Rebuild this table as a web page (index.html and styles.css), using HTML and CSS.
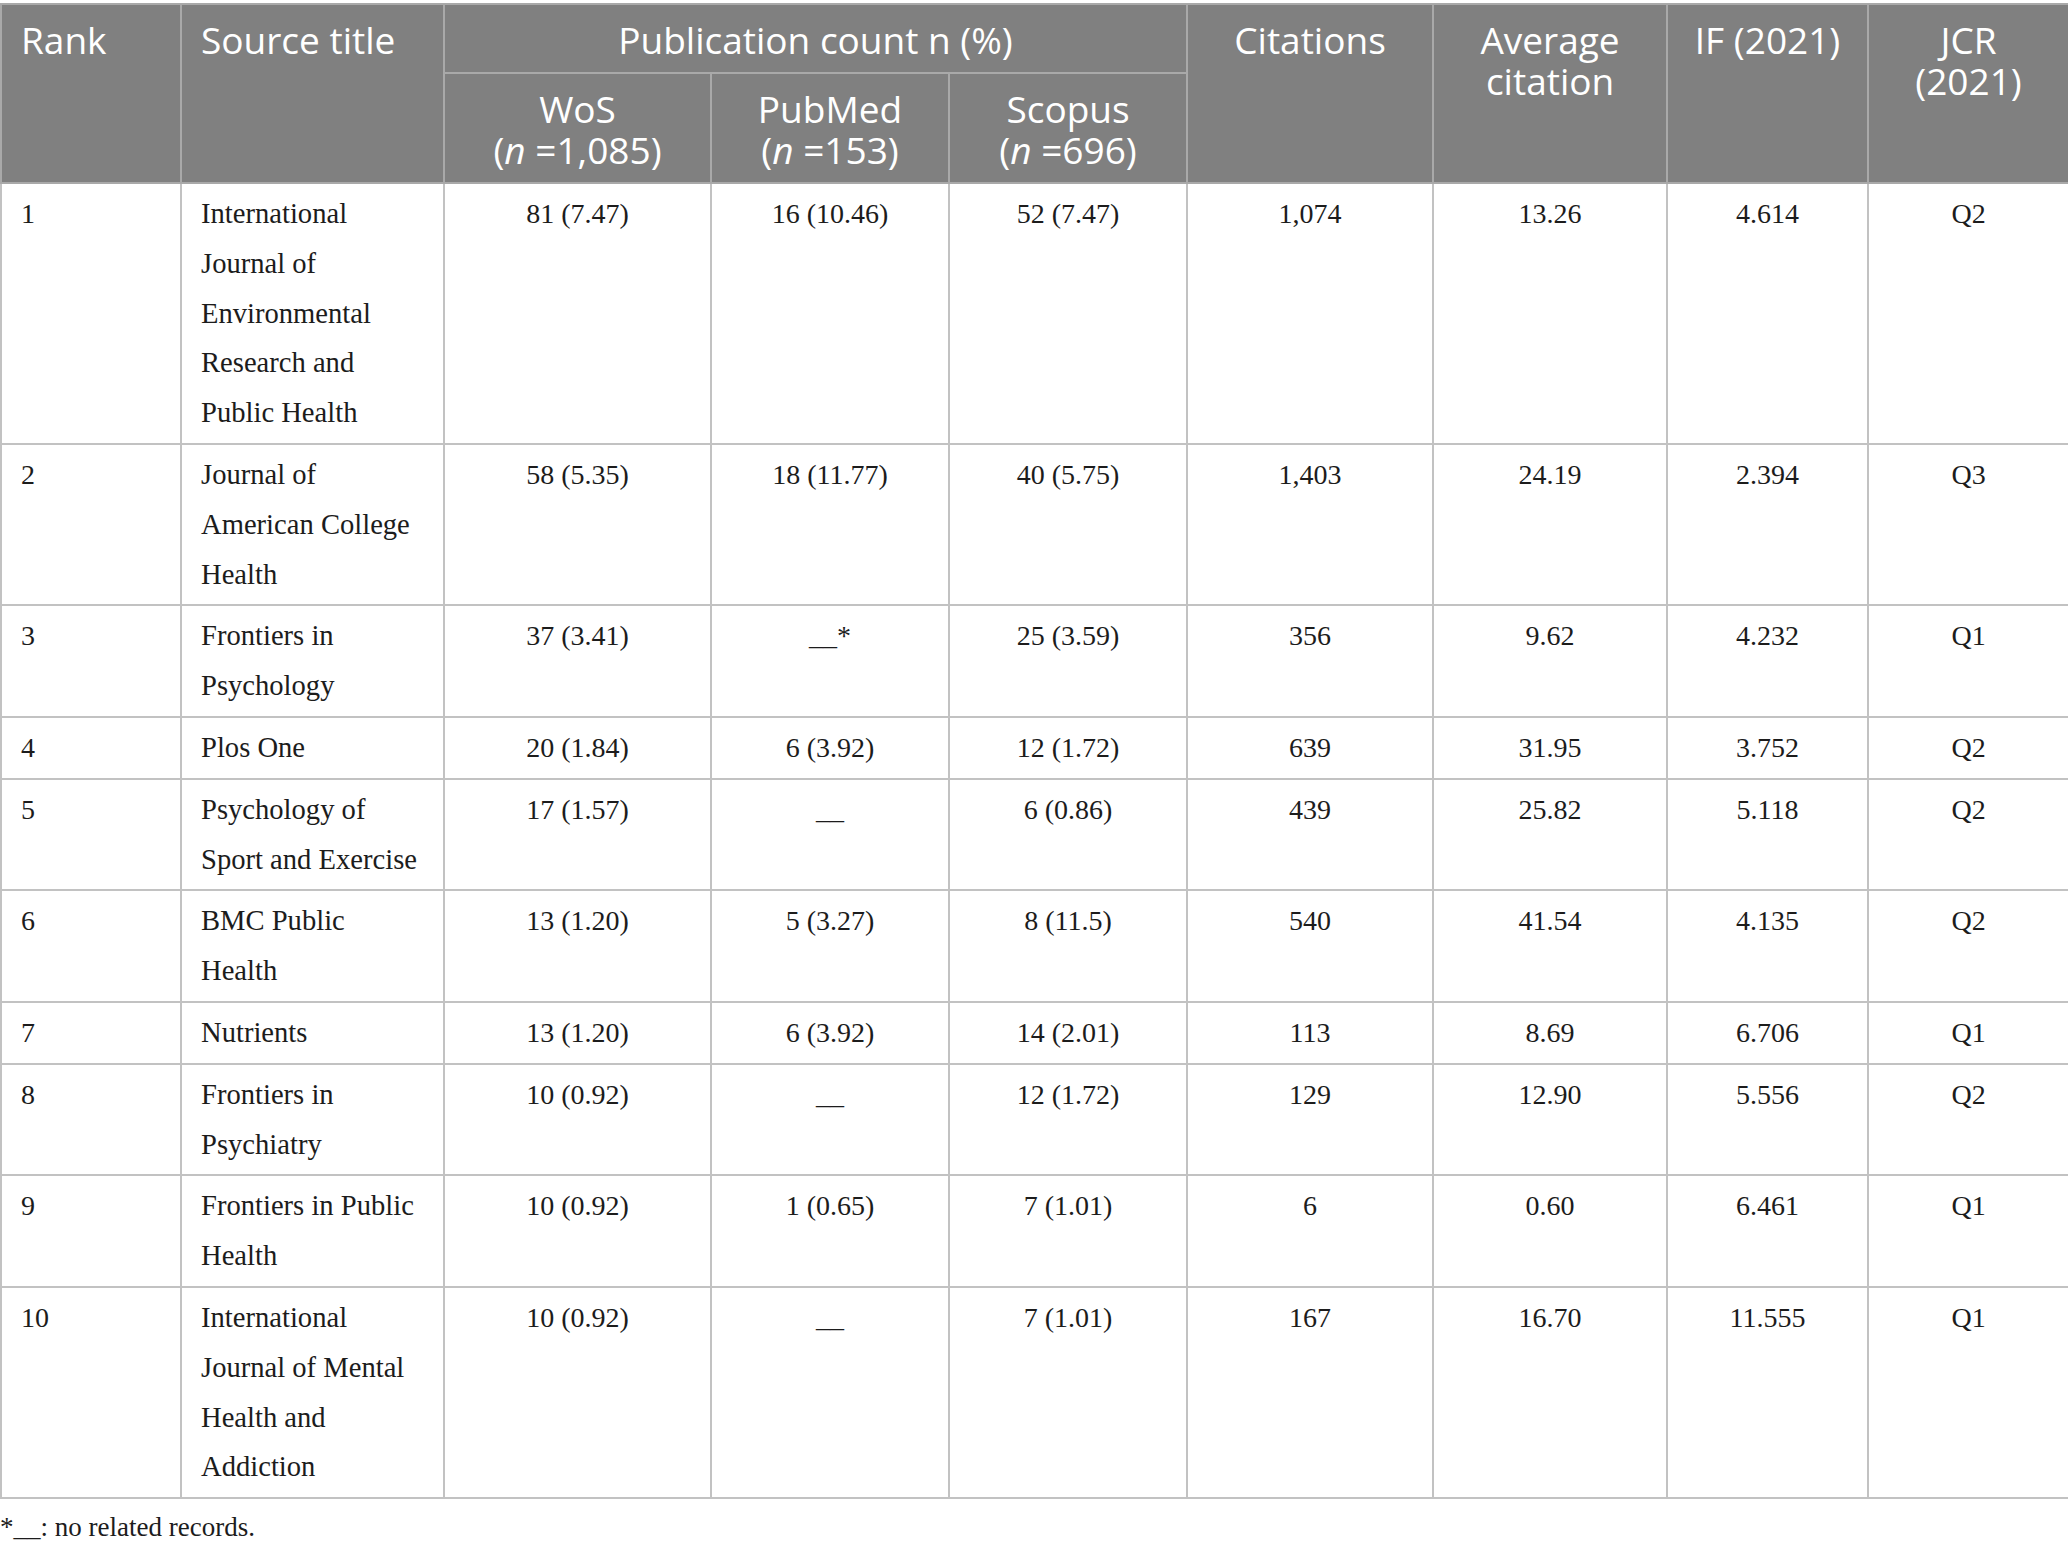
FILE: index.html
```html
<!DOCTYPE html>
<html lang="en">
<head>
<meta charset="UTF-8">
<meta name="viewport" content="width=device-width, initial-scale=1.0">
<title>Top 10 source titles</title>

<link rel="stylesheet" href="styles.css">
</head>

<body>

<table class="sources">
<colgroup>
<col class="c-rank">
<col class="c-title">
<col class="c-wos">
<col class="c-pub">
<col class="c-sco">
<col class="c-cit">
<col class="c-avg">
<col class="c-if">
<col class="c-jcr">
</colgroup>

<thead>
<tr>
<th rowspan="2" class="left">Rank</th>
<th rowspan="2" class="left">Source title</th>
<th colspan="3">Publication count n (%)</th>
<th rowspan="2">Citations</th>
<th rowspan="2">Average<br>citation</th>
<th rowspan="2">IF (2021)</th>
<th rowspan="2">JCR<br>(2021)</th>
</tr>
<tr>
<th>WoS<br>(<i>n</i> =1,085)</th>
<th>PubMed<br>(<i>n</i> =153)</th>
<th>Scopus<br>(<i>n</i> =696)</th>
</tr>
</thead>

<tbody>
<tr>
<td class="left">1</td>
<td class="left title">International<br>Journal of<br>Environmental<br>Research and<br>Public Health</td>
<td>81 (7.47)</td><td>16 (10.46)</td><td>52 (7.47)</td>
<td>1,074</td><td>13.26</td><td>4.614</td><td>Q2</td>
</tr>
<tr>
<td class="left">2</td>
<td class="left title">Journal of<br>American College<br>Health</td>
<td>58 (5.35)</td><td>18 (11.77)</td><td>40 (5.75)</td>
<td>1,403</td><td>24.19</td><td>2.394</td><td>Q3</td>
</tr>
<tr>
<td class="left">3</td>
<td class="left title">Frontiers in<br>Psychology</td>
<td>37 (3.41)</td><td>__*</td><td>25 (3.59)</td>
<td>356</td><td>9.62</td><td>4.232</td><td>Q1</td>
</tr>
<tr>
<td class="left">4</td>
<td class="left title">Plos One</td>
<td>20 (1.84)</td><td>6 (3.92)</td><td>12 (1.72)</td>
<td>639</td><td>31.95</td><td>3.752</td><td>Q2</td>
</tr>
<tr>
<td class="left">5</td>
<td class="left title">Psychology of<br>Sport and Exercise</td>
<td>17 (1.57)</td><td>__</td><td>6 (0.86)</td>
<td>439</td><td>25.82</td><td>5.118</td><td>Q2</td>
</tr>
<tr>
<td class="left">6</td>
<td class="left title">BMC Public<br>Health</td>
<td>13 (1.20)</td><td>5 (3.27)</td><td>8 (11.5)</td>
<td>540</td><td>41.54</td><td>4.135</td><td>Q2</td>
</tr>
<tr>
<td class="left">7</td>
<td class="left title">Nutrients</td>
<td>13 (1.20)</td><td>6 (3.92)</td><td>14 (2.01)</td>
<td>113</td><td>8.69</td><td>6.706</td><td>Q1</td>
</tr>
<tr>
<td class="left">8</td>
<td class="left title">Frontiers in<br>Psychiatry</td>
<td>10 (0.92)</td><td>__</td><td>12 (1.72)</td>
<td>129</td><td>12.90</td><td>5.556</td><td>Q2</td>
</tr>
<tr>
<td class="left">9</td>
<td class="left title">Frontiers in Public<br>Health</td>
<td>10 (0.92)</td><td>1 (0.65)</td><td>7 (1.01)</td>
<td>6</td><td>0.60</td><td>6.461</td><td>Q1</td>
</tr>
<tr>
<td class="left">10</td>
<td class="left title">International<br>Journal of Mental<br>Health and<br>Addiction</td>
<td>10 (0.92)</td><td>__</td><td>7 (1.01)</td>
<td>167</td><td>16.70</td><td>11.555</td><td>Q1</td>
</tr>
</tbody>
</table>

<p class="note">*__: no related records.</p>

</body>
</html>
```

FILE: styles.css
```css
body{
    margin:0;
    background:#fff;
    font-family:"Liberation Serif", "Times New Roman", serif;
    color:#1c1c1c;
}

.sources{
    width:2068px;
    margin-top:3px;
    border-collapse:collapse;
    table-layout:fixed;
}

.c-rank{ width:180px; }
.c-title{ width:263px; }
.c-wos{ width:267px; }
.c-pub{ width:238px; }
.c-sco{ width:238px; }
.c-cit{ width:246px; }
.c-avg{ width:234px; }
.c-if{ width:201px; }
.c-jcr{ width:201px; }

th{
    background:#808080;
    color:#fff;
    font-family:"Open Sans", "Noto Sans", sans-serif;
    font-weight:400;
    font-size:37px;
    line-height:41px;
    padding:14px 8px 12px;
    border:2px solid #a9a9a9;
    text-align:center;
    vertical-align:top;
}

td{
    font-size:28px;
    line-height:49.8px;
    padding:5px 10px;
    border:2px solid #c2c2c2;
    text-align:center;
    vertical-align:top;
}

th.left, td.left{
    text-align:left;
    padding-left:19px;
}

td.title{
    font-size:28.6px;
}

.note{
    margin:4px 0 0;
    font-size:27px;
    line-height:48px;
}
```
